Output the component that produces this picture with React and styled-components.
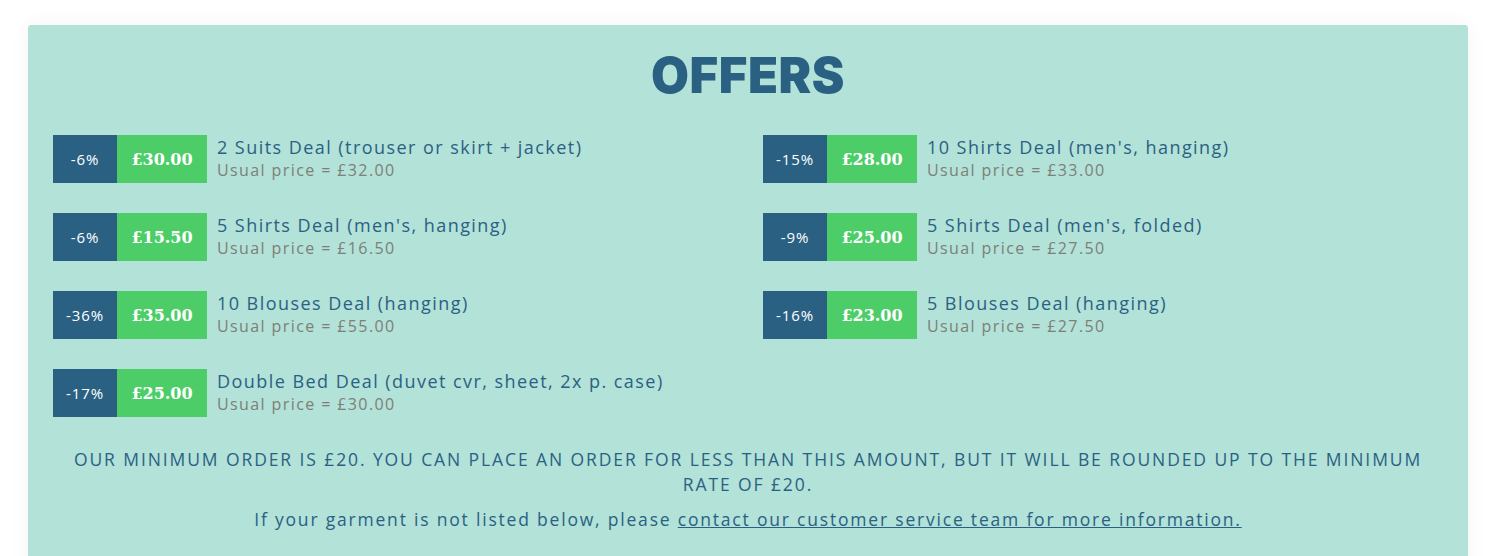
import styled, { createGlobalStyle } from "styled-components";

const GlobalStyle = createGlobalStyle`
	body {
		margin: 0;
		background: #ffffff;
		font-family: "Open Sans", "Liberation Sans", sans-serif;
	}
`;

const Page = styled.div`
	padding: 25px 28px 0;
`;

const Card = styled.section`
	background-color: #b3e2d8;
	border-radius: 3px;
	box-shadow: 0 0 20px rgba(0, 0, 0, 0.05);
	padding: 22px 25px 40px;
`;

const Title = styled.h2`
	margin: 0 0 30px;
	text-align: center;
	font-family: Inter, "DejaVu Sans", sans-serif;
	font-weight: 900;
	font-size: 49px;
	line-height: 58px;
	letter-spacing: 0.6px;
	color: #2a6183;
`;

const Grid = styled.div`
	display: grid;
	grid-template-columns: 1fr 1fr;
	column-gap: 30px;
	row-gap: 30px;
`;

const Offer = styled.div`
	display: flex;
	align-items: flex-start;
`;

const Discount = styled.div`
	display: flex;
	align-items: center;
	justify-content: center;
	height: 48px;
	width: 64px;
	flex-shrink: 0;
	color: #ffffff;
	background-color: #2a6183;
	font-size: 15px;
	letter-spacing: 0.9px;
`;

const Price = styled(Discount)`
	width: 90px;
	background-color: #4ccd68;
	font-family: "DejaVu Serif", serif;
	font-weight: 700;
	font-size: 16px;
	letter-spacing: 0;
`;

const Info = styled.div`
	margin-left: 10px;
`;

const Name = styled.div`
	font-size: 18px;
	line-height: 24px;
	letter-spacing: 1.45px;
	color: #2a6183;
`;

const Usual = styled.div`
	font-size: 16px;
	line-height: 22px;
	letter-spacing: 1.4px;
	color: #7c8077;
`;

const Notice = styled.p`
	margin: 30px 0 0;
	text-align: center;
	text-transform: uppercase;
	font-size: 17.5px;
	line-height: 25px;
	letter-spacing: 1.9px;
	color: #2a6183;
	padding: 0 10px;
`;

const Contact = styled.p`
	margin: 10px 0 0;
	text-align: center;
	font-size: 17.5px;
	line-height: 25px;
	letter-spacing: 1.8px;
	color: #2a6183;

	a {
		color: #2a6183;
		text-decoration: underline;
	}
`;

const offers = [
	{ off: "-6%", price: "£30.00", name: "2 Suits Deal (trouser or skirt + jacket)", usual: "£32.00" },
	{ off: "-15%", price: "£28.00", name: "10 Shirts Deal (men's, hanging)", usual: "£33.00" },
	{ off: "-6%", price: "£15.50", name: "5 Shirts Deal (men's, hanging)", usual: "£16.50" },
	{ off: "-9%", price: "£25.00", name: "5 Shirts Deal (men's, folded)", usual: "£27.50" },
	{ off: "-36%", price: "£35.00", name: "10 Blouses Deal (hanging)", usual: "£55.00" },
	{ off: "-16%", price: "£23.00", name: "5 Blouses Deal (hanging)", usual: "£27.50" },
	{ off: "-17%", price: "£25.00", name: "Double Bed Deal (duvet cvr, sheet, 2x p. case)", usual: "£30.00" },
];

const App = () => {
	return (
		<>
			<GlobalStyle />
			<Page>
				<Card>
					<Title>OFFERS</Title>
					<Grid>
						{offers.map((o, i) => (
							<Offer key={i}>
								<Discount>{o.off}</Discount>
								<Price>{o.price}</Price>
								<Info>
									<Name>{o.name}</Name>
									<Usual>Usual price = {o.usual}</Usual>
								</Info>
							</Offer>
						))}
					</Grid>
					<Notice>
						Our minimum order is £20. You can place an order for less than this amount, but it will be rounded up to the minimum rate of £20.
					</Notice>
					<Contact>
						If your garment is not listed below, please <a href="#">contact our customer service team for more information.</a>
					</Contact>
				</Card>
			</Page>
		</>
	);
};

export default App;
